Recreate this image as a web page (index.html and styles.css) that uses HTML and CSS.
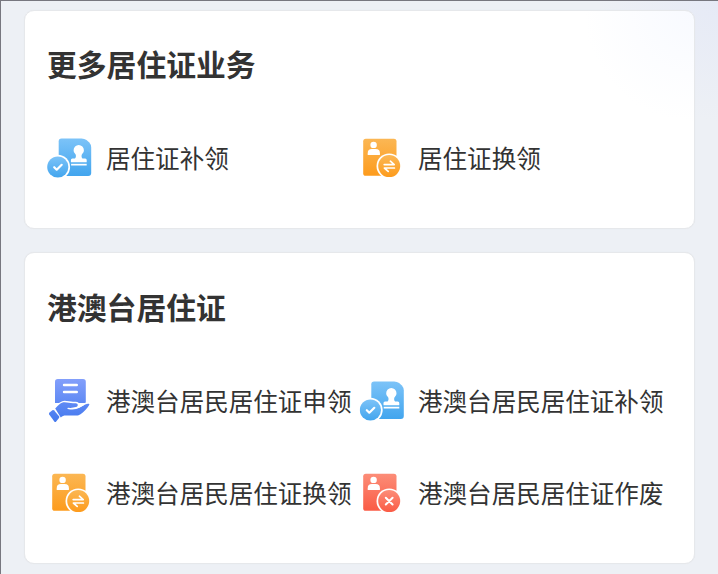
FILE: index.html
```html
<!DOCTYPE html>
<html lang="zh-CN">
<head>
    <meta charset="UTF-8">
    <meta name="viewport" content="width=device-width, initial-scale=1.0">
    <title>居住证业务</title>
    <link rel="stylesheet" href="styles.css">
</head>
<body>
    <!-- shared icons -->
    <svg class="sprite" width="0" height="0" aria-hidden="true">
        <defs>
            <linearGradient id="blue" x1="0" y1="0" x2="0" y2="1">
                <stop offset="0" stop-color="#7cc3f8"/>
                <stop offset="1" stop-color="#42a5ee"/>
            </linearGradient>
            <linearGradient id="orange" x1="0" y1="0" x2="0" y2="1">
                <stop offset="0" stop-color="#fbb754"/>
                <stop offset="1" stop-color="#fd9b1c"/>
            </linearGradient>
            <linearGradient id="red" x1="0" y1="0" x2="0" y2="1">
                <stop offset="0" stop-color="#fc8d78"/>
                <stop offset="1" stop-color="#fa5b45"/>
            </linearGradient>
            <linearGradient id="indigo" gradientUnits="userSpaceOnUse" x1="0" y1="0" x2="0" y2="43">
                <stop offset="0" stop-color="#839ffb"/>
                <stop offset="1" stop-color="#4278ee"/>
            </linearGradient>
        </defs>
        <symbol id="icon-stamp" viewBox="0 0 46 46">
            <path fill="url(#blue)" d="M14.5 2.5H34.5Q37.5 2.5 39.5 4L42.3 6.5Q44.2 8.6 44.2 11.5V37Q44.2 40 41.2 40H14.5Q11.7 40 11.7 37V5.3Q11.7 2.5 14.5 2.5Z"/>
            <path fill="#fff" d="M31.7 9a5.2 5.2 0 0 1 5.2 5.2c0 1.8-.9 2.8-1.9 4-.8 1.2-.5 4.3 1 4.3h2.2q1.5 0 1.5 1.5v2.2H23.9v-2.2q0-1.5 1.5-1.5h2.1c1.5 0 1.8-3.1 1-4.3-1-1.2-1.9-2.2-1.9-4a5.2 5.2 0 0 1 5.1-5.2Z"/>
            <path fill="#fff" d="M24.1 27.8h15.6v1.7H24.1Z"/>
            <circle cx="10.8" cy="31" r="12.3" fill="#fff"/>
            <circle cx="10.8" cy="31" r="10.6" fill="url(#blue)"/>
            <path class="stroke" stroke-width="2.2" d="M7.2 31.2l2.5 2.5 5-4.900"/>
        </symbol>
        <symbol id="icon-exchange" viewBox="0 0 46 46">
            <rect x="5.2" y="2.7" width="33.3" height="37.1" rx="2.6" fill="url(#orange)"/>
            <circle cx="15.6" cy="8.9" r="3.2" fill="#fff"/>
            <path fill="#fff" d="M9.7 19v-1.8q0-4.2 4.2-4.2h3.8q4.2 0 4.2 4.2V19Z"/>
            <circle cx="31.2" cy="30.1" r="12.7" fill="#fff"/>
            <circle cx="31.2" cy="30.1" r="11" fill="url(#orange)"/>
            <path class="stroke" stroke-width="1.7" d="M26.2 28.6h10l-3.8-3.4M36.4 32h-10l3.8 3.4"/>
        </symbol>
        <symbol id="icon-void" viewBox="0 0 46 46">
            <rect x="5.2" y="2.7" width="33.3" height="37.1" rx="2.6" fill="url(#red)"/>
            <circle cx="15.6" cy="8.9" r="3.2" fill="#fff"/>
            <path fill="#fff" d="M9.7 19v-1.8q0-4.2 4.2-4.2h3.8q4.2 0 4.2 4.2V19Z"/>
            <circle cx="31.2" cy="30.1" r="12.7" fill="#fff"/>
            <circle cx="31.2" cy="30.1" r="11" fill="url(#red)"/>
            <path class="stroke" stroke-width="2" d="M27.8 26.7l6.8 6.8M34.6 26.7l-6.8 6.8"/>
        </symbol>
        <symbol id="icon-apply" viewBox="0 0 46 46">
            <path fill="url(#indigo)" d="M10.8 0H36Q38.8 0 38.8 2.8V24H8V2.8Q8 0 10.8 0Z"/>
            <path class="stroke" stroke-width="2.4" d="M17 6h12.8M17 13h12.8"/>
            <path fill="url(#indigo)" stroke="#fff" stroke-width="3" paint-order="stroke" d="M8.2 29.6C11.5 26 14 23.3 17.5 23.3c3.5 0 5 .9 8.5 .9h2.7c2.7 0 2.7 3.3 .3 3.8l-7 1.2c3 1.2 7.5 .8 10.3-.7l6.5-3.3c2-1 4.2-.6 3.4 .8-2.2 3.6-5.7 7.2-8.7 9.3-1.3 .9-2.5 1.3-4 1.3H18.5c-1.8 0-3 .5-4.7 1.8Z"/>
            <path class="stroke" stroke-width="1.2" d="M21 29.3c4 .9 8.2 .4 11.2-1.2l4-2.1"/>
            <path fill="url(#indigo)" d="M2.6 33.4L5.4 31.2Q6.4 30.5 7.2 31.4L12 37.3Q12.6 38.2 12 39L9.2 42.4Q8.2 43.4 7.3 42.4L2.2 35.5Q1.5 34.3 2.6 33.4Z"/>
        </symbol>
    </svg>

    <div class="page">
        <section class="card">
            <h2>更多居住证业务</h2>
            <div class="service-list">
                <div class="service">
                    <svg class="icon"><use href="#icon-stamp"/></svg>
                    <span>居住证补领</span>
                </div>
                <div class="service">
                    <svg class="icon"><use href="#icon-exchange" x="-1"/></svg>
                    <span>居住证换领</span>
                </div>
            </div>
        </section>

        <section class="card card-hmt">
            <h2>港澳台居住证</h2>
            <div class="service-list">
                <div class="service">
                    <svg class="icon"><use href="#icon-apply"/></svg>
                    <span>港澳台居民居住证申领</span>
                </div>
                <div class="service">
                    <svg class="icon"><use href="#icon-stamp" x="0.6"/></svg>
                    <span>港澳台居民居住证补领</span>
                </div>
                <div class="service">
                    <svg class="icon"><use href="#icon-exchange"/></svg>
                    <span>港澳台居民居住证换领</span>
                </div>
                <div class="service">
                    <svg class="icon"><use href="#icon-void" x="-1"/></svg>
                    <span>港澳台居民居住证作废</span>
                </div>
            </div>
        </section>
    </div>
</body>
</html>
```
FILE: styles.css
```css
* {
    box-sizing: border-box;
}

body {
    margin: 0;
    font-family: "Noto Sans CJK SC", sans-serif;
    color: #333;
}

.sprite {
    display: block;
}

.page {
    display: flex;
    flex-direction: column;
    gap: 23px;
    height: 574px;
    padding: 9px 23px 0;
    border-top: 1px solid #77777f;
    border-left: 1px solid #77777f;
    background: radial-gradient(circle at 100% 0, #e6eaf6 0, #edf0f5 120px);
    overflow: hidden;
}

.card {
    width: 671px;
    padding: 32px 0 46px 22px;
    border: 1px solid #e6e8eb;
    border-radius: 10px;
    background-color: #fff;
    box-shadow: 0 0 1px #e2e4e8;
}

.card:first-child {
    background-image: radial-gradient(circle at 100% 0, #f8faff 0, #fff 110px);
}

.card h2 {
    margin: 0 0 53px;
    font-size: 29.8px;
    font-weight: 700;
    line-height: 40px;
}

.card-hmt {
    padding-top: 33px;
}

.service-list {
    display: grid;
    grid-template-columns: 312px 312px;
    row-gap: 46px;
}

.service {
    display: flex;
    align-items: center;
    height: 46px;
    white-space: nowrap;
    font-size: 24.55px;
    line-height: 36px;
}

.service span {
    padding-bottom: 2px;
}

.icon {
    flex: none;
    width: 46px;
    height: 46px;
    margin-right: 13px;
    overflow: visible;
}

.stroke {
    fill: none;
    stroke: #fff;
    stroke-linecap: round;
    stroke-linejoin: round;
}
```
